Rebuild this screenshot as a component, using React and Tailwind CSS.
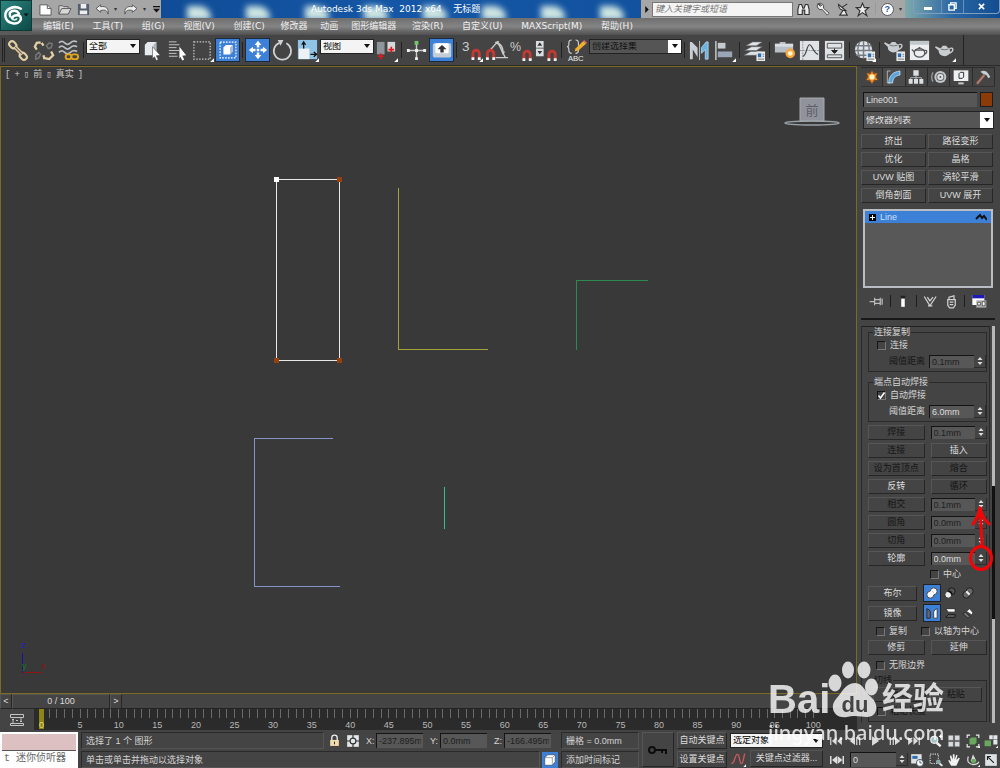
import React from 'react'
import clsx from 'clsx'

const Icon = ({ size = 'size-6', children }) => (
  <svg viewBox="0 0 24 24" className={clsx('shrink-0', size)} fill="none" aria-hidden="true">
    {children}
  </svg>
)

const Corner = () => <path d="M24 20v4h-4z" fill="#fff" />

const Magnet = ({ x = 13, y = 11 }) => (
  <g transform={`translate(${x} ${y})`}>
    <path d="M1.500 10V5a3.300 3.300 0 0 1 6.600 0v5" stroke="#c23a32" strokeWidth="3" />
    <path d="M0 10.500h3M6.600 10.500h3" stroke="#f0f0f0" strokeWidth="3" />
  </g>
)

const Teapot = () => (
  <g fill="#c9cdd0">
    <ellipse cx="12" cy="13" rx="6" ry="5" />
    <path d="M7 13 2 8.500l1-1L8 10zM10 7h4l1 2H9z" />
    <path d="M17 10c5-2 5 3 0 5" stroke="#c9cdd0" strokeWidth="1.400" fill="none" />
    <path d="M8 10.500q4 1.600 8 0" stroke="#6c7378" fill="none" />
  </g>
)

const Sheet = () => (
  <g>
    <path d="M14 13h9v10h-9z" fill="#e8eaec" />
    <path d="M15.500 15h3.500v4h-3.500z" fill="#2c6fb0" />
    <path d="M20.500 16h1.500M20.500 18h1.500M15.500 21H22" stroke="#777" />
  </g>
)

const icons = {
  link: (
    <g stroke="#e3cfa5" strokeWidth="2.200">
      <rect x="2" y="3" width="8" height="6" rx="3" transform="rotate(45 6 6)" />
      <rect x="13" y="15" width="8" height="6" rx="3" transform="rotate(45 17 18)" />
      <path d="m8 8 8 8" strokeWidth="4" />
      <path d="m8.500 8.500 7 7" stroke="#6d6250" strokeWidth="1.200" />
    </g>
  ),
  unlink: (
    <g strokeWidth="2.400">
      <path d="M9 3.500 5 4 3 8l2 3M10 4l2 3M13 20l5 1 4-4-2-4M12 17l1 4" stroke="#e3cfa5" />
      <path d="m15 7 3-3 3 1-1 4-3 1zM4 17l3-3 2 2-2 4-3 1z" stroke="#777" strokeWidth="1.600" />
    </g>
  ),
  bind: (
    <g>
      <path d="M2 4q3-3 6 0t6 0 7-1M2 9q3-3 6 0t6 0 7-1M2 14q3-3 6 0t6 0 7-1" stroke="#b9bcc0" strokeWidth="1.700" />
      <rect x="9" y="16" width="6" height="5" rx="2.500" fill="#444" stroke="#e0a41e" strokeWidth="2" />
      <rect x="15" y="16" width="7" height="5" rx="2.500" fill="#444" stroke="#e0a41e" strokeWidth="2" />
    </g>
  ),
  select: (
    <g>
      <path d="m4 6 3-3h9v11l-3 3H4z" fill="#e8ebed" />
      <path d="M13 6v11l3-3V3z" fill="#aeb5bb" />
      <path d="m12 8 8 9-4 .5 2 4-2 1-2-4-2 2z" fill="#fff" stroke="#444" strokeWidth=".6" />
    </g>
  ),
  selectByName: (
    <g>
      <path d="M3 3h8M3 6h11M3 9h8M3 12h11M3 15h8M3 18h9" stroke="#c5c8ca" />
      <path d="m14 8 7 9-4 .5 2 4-2 1-2-4-1 2z" fill="#fff" />
    </g>
  ),
  region: (
    <g>
      <rect x="3" y="3" width="17" height="18" stroke="#ccc" strokeWidth="1.300" strokeDasharray="1.500 1.500" />
      <Corner />
    </g>
  ),
  crossing: (
    <g>
      <rect x="2.500" y="2.500" width="19" height="19" stroke="#fff" strokeWidth="1.400" strokeDasharray="2 1.500" />
      <path d="m6.500 9 3-3h8v8l-3 3.500h-8z" fill="#fff" />
      <path d="M14.500 9v8.500l3-3.500V6z" fill="#a9bad0" />
    </g>
  ),
  move: (
    <path
      d="m12 1 4 5h-2.500v3h-3V6H8zM12 23l-4-5h2.500v-3h3v3H16zM1 12l5-4v2.500h3v3H6V16zM23 12l-5 4v-2.500h-3v-3h3V8zM10.500 10.500h3v3h-3z"
      fill="#fff"
    />
  ),
  rotate: (
    <g>
      <path d="M16 4.500a9 9 0 1 1-7-.5" stroke="#cfd2d4" strokeWidth="1.800" />
      <path d="M7 1h6l-3 6z" fill="#cfd2d4" />
    </g>
  ),
  scale: (
    <g>
      <path d="M2 1h20v20H2z" fill="#8fc4e6" />
      <path d="M3 10h11v11H3z" fill="#eef1f3" />
      <path d="M8 10V4M6 6l2-3 2 3M15 16h6M18.500 13.500l3 2.500-3 2.500" stroke="#111" strokeWidth="1.400" />
      <Corner />
    </g>
  ),
  pivot: (
    <g>
      <path d="M2 3h8v13H2z" fill="#8e959b" />
      <path d="M13 3h8v10h-8z" fill="#d5d9dc" />
      <path d="M6 15v6M3 18h6M17 8v6M14 11h6" stroke="#e01b1b" strokeWidth="1.800" />
      <Corner />
    </g>
  ),
  manipulate: (
    <g>
      <path d="M12 5v16M4 12h16" stroke="#c9c9c9" strokeWidth="1.500" />
      <path d="M10.500 10.500h3v3h-3zM2 10.500h3v3H2zM19 10.500h3v3h-3zM10.500 19h3v3h-3z" fill="#eee" />
      <path d="M10 2h4v4h-4z" fill="#74c46b" />
    </g>
  ),
  keyboard: (
    <g>
      <rect x="1" y="4" width="22" height="17" rx="2" fill="#c4ccd4" />
      <rect x="4" y="4" width="16" height="12" rx="1" fill="#fff" />
      <path d="m12 6 5.500 5H14v4h-4v-4H6.500z" fill="#333" />
    </g>
  ),
  angle: (
    <g>
      <path d="M5 12 13 3l8 16M11 4q8 0 8 12M11 19.500h13" stroke="#ccc" strokeWidth="1.400" />
      <path d="m10 3 5-1-2 4zM17 13h4l-2 4z" fill="#ccc" />
      <Magnet x={1} y={10} />
    </g>
  ),
  spinner: (
    <g>
      <path d="M1 2h8v7H1zM1 10h8v8H1z" fill="#d9dee2" />
      <path d="m5 3.500 2.500 3.500h-5zM5 16l2.500-3.500h-5z" fill="#333" />
      <Magnet x={13} y={11} />
    </g>
  ),
  mirror: (
    <g>
      <path d="M2 3v18h3V11l5 8V9L4 3z" fill="#c9cfd4" />
      <path d="M12 2v20" stroke="#bbb" />
      <path d="M21 3v18h-3V11l-4 4V9l5-6z" fill="#6fb1de" stroke="#bfe0f5" strokeWidth=".8" />
    </g>
  ),
  align: (
    <g>
      <path d="M3 2v20" stroke="#ccc" strokeWidth="1.500" />
      <path d="M5 4h8v6H5z" fill="#c5cacf" />
      <path d="M5 13h15v6H5z" fill="#9aa5b5" />
      <Corner />
    </g>
  ),
  layers: (
    <g>
      <path d="m3 7 7-4h10l-6 4zM2 12l7-4h11l-6 4zM1 17l7-4h11l-6 4z" fill="#dfe3e6" stroke="#666" strokeWidth=".6" />
      <Sheet />
    </g>
  ),
  graphite: (
    <g>
      <path d="M2 5h5V3h6v2h8v9H2z" fill="#b9bfc6" />
      <path d="M2 5h19v3H2z" fill="#d9dde1" />
      <circle cx="18" cy="15" r="5" fill="#f7a53c" />
      <circle cx="18" cy="15" r="2.500" fill="#fff6cf" />
    </g>
  ),
  curve: (
    <g>
      <path d="M2 2h20v20H2z" fill="#dfe3e6" />
      <path d="M5 2v20M2 12h20" stroke="#8b9298" strokeDasharray="2 1" />
      <path d="M5 18c4 0 4-12 7-12s4 9 9 10" stroke="#444" strokeWidth="1.300" />
    </g>
  ),
  schematic: (
    <g>
      <path d="M2 2h20v20H2z" fill="#dfe3e6" />
      <path d="M4.500 4.500h15v5h-15zM4.500 16.500h15v3h-15z" stroke="#555" />
      <path d="M12 10v4M9 12l3 3 3-3z" stroke="#222" fill="#222" />
    </g>
  ),
  material: (
    <g>
      <circle cx="11" cy="11" r="9" fill="#e1e5e8" />
      <path d="M3 7h16M2 12h18M3 17h16M11 2v18M7 3q-4 8 0 16M15 3q4 8 0 16" stroke="#747b82" strokeWidth="1.500" />
      <Sheet />
      <Corner />
    </g>
  ),
  renderSetup: (
    <g>
      <g transform="translate(-1 -4)">
        <Teapot />
      </g>
      <Sheet />
    </g>
  ),
  renderFrame: (
    <g>
      <path d="M2 2h20v20H2z" fill="#eceef0" />
      <path d="M2 2h20v4H2z" fill="#c2c7cb" />
      <ellipse cx="12" cy="14.500" rx="5.500" ry="4.500" stroke="#555" strokeWidth="1.300" />
      <path d="m7 14-3-3M17 12c4-1 3 3 0 4M7 11.500h10M11 9h2" stroke="#555" strokeWidth="1.300" />
    </g>
  ),
  render: (
    <g>
      <Teapot />
      <Corner />
    </g>
  ),
}

const ToolButton = ({ name, active, children }) => (
  <button
    aria-label={name}
    className={clsx(
      'flex h-6 w-[25px] shrink-0 items-center justify-center',
      active && 'border border-[#1c2a3c] bg-[#3d80d8]'
    )}
  >
    <Icon size={active ? 'size-[20px]' : 'size-[23px]'}>{children || icons[name]}</Icon>
  </button>
)

const ToolSep = () => (
  <div className="flex h-4 w-[5px] shrink-0 justify-center">
    <div className="w-px bg-[#222]" />
  </div>
)

const Drop = ({ label, value, className, dark }) => (
  <div
    className={clsx(
      'relative h-[15px] shrink-0 border border-[#222]',
      dark ? 'bg-[#555]' : 'bg-[#f4f4f4] text-black',
      className
    )}
  >
    <select aria-label={label} className="block h-full w-full appearance-none px-0.5 leading-none outline-none">
      <option>{value}</option>
    </select>
    <span
      className={clsx(
        'pointer-events-none absolute inset-y-0 right-0 flex w-[13px] items-center justify-center',
        dark && 'bg-white'
      )}
    >
      <svg viewBox="0 0 6 4" className="h-1 w-1.5">
        <path d="M0 0h6L3 4z" fill="#111" />
      </svg>
    </span>
  </div>
)

const Btn = ({ off, className, children }) => (
  <button
    disabled={off}
    className={clsx(
      'h-[15px] truncate border border-t-[#565656] border-r-[#262626] border-b-[#262626] border-l-[#565656] bg-[#444] text-center leading-[13px]',
      off ? 'text-[#161616]' : 'text-[#dcdcdc]',
      className
    )}
  >
    {children}
  </button>
)

const Field = ({ label, value, off, className }) => (
  <input
    aria-label={label}
    defaultValue={value}
    className={clsx(
      'h-[13px] min-w-0 border-t border-l border-[#141414] bg-[#575757] px-0.5 leading-none outline-none',
      off ? 'text-[#1e1e1e]' : 'text-[#dedede]',
      className
    )}
  />
)

const Spin = () => (
  <button aria-label="spinner" className="flex h-[13px] w-3 shrink-0 items-center justify-center border-r border-b border-[#2c2c2c]">
    <svg viewBox="0 0 6 10" className="h-[10px] w-1.5" fill="#ddd">
      <path d="M3 1 5.500 4h-5zM3 9 .5 6h5z" />
    </svg>
  </button>
)

const Check = ({ label, checked, className }) => (
  <label className={clsx('flex items-center gap-1', className)}>
    <span className="relative size-[9px] shrink-0">
      <input
        type="checkbox"
        defaultChecked={checked}
        className="peer block size-[9px] appearance-none border border-t-[#161616] border-r-[#777] border-b-[#777] border-l-[#161616] bg-[#444]"
      />
      <svg viewBox="0 0 9 9" className="pointer-events-none absolute inset-0 hidden peer-checked:block" fill="none">
        <path d="M1.500 4.500 3.500 7 7.500 1.500" stroke="#fff" strokeWidth="1.600" />
      </svg>
    </span>
    {label}
  </label>
)

const TitleBar = () => (
  <div className="flex h-[18px] bg-[#a6a6a6]">
    <div className="flex w-[129px] shrink-0 items-center pl-1 text-[#333]">
      <button aria-label="New" className="w-[19px] px-0.5">
        <svg viewBox="0 0 16 14" className="h-[13px] w-[15px]"><path d="M2 2h8l4 4v7H2z" fill="#fff" stroke="#555" /><path d="M10 2v4h4" fill="none" stroke="#555" /></svg>
      </button>
      <button aria-label="Open" className="w-[19px] px-0.5">
        <svg viewBox="0 0 16 14" className="h-[13px] w-[15px]"><path d="M2 12V3h4l1 1h5v2h3l-3 6z" fill="#d8d8d8" stroke="#555" /><path d="m2 12 3-6h7" fill="none" stroke="#555" /></svg>
      </button>
      <button aria-label="Save" className="w-[19px] px-0.5">
        <svg viewBox="0 0 16 14" className="h-[13px] w-[15px]"><path d="M2 1h12v12H2z" fill="#555e6e" /><path d="M5 1h6v5H5zM4 8h8v4H4z" fill="#eee" /></svg>
      </button>
      <button aria-label="Undo" className="w-[19px] px-0.5">
        <svg viewBox="0 0 16 14" className="h-[13px] w-[15px]"><path d="m1 6 5-4v2c6-1 9 2 8 8-1-4-3-5-8-4v2z" fill="#eee" stroke="#555" /></svg>
      </button>
      <span className="w-[7px] text-center text-[6px]">▾</span>
      <button aria-label="Redo" className="w-[21px] pl-1">
        <svg viewBox="0 0 16 14" className="h-[13px] w-[15px]"><path d="m15 6-5-4v2C4 3 1 6 2 12c1-4 3-5 8-4v2z" fill="#eee" stroke="#555" /></svg>
      </button>
      <span className="w-[9px] text-center text-[6px]">▾</span>
      <button aria-label="Customize" className="pl-1">
        <svg viewBox="0 0 8 8" className="size-[7px]"><path d="M0 0h8v1.500H0zM0 3h8L4 7.500z" fill="#111" /></svg>
      </button>
    </div>
    <div className="relative flex-1 overflow-hidden bg-gradient-to-r from-[#0f4c97] via-[#1557a6] to-[#12529f]">
      <div className="flex h-full items-end justify-around pl-2">
        {['a', 'b', 'c', 'd', 'e', 'f', 'g', 'h'].map((k) => (
          <span key={k} className="h-3.5 w-6 translate-y-0.5 rounded-tr-xl bg-[#cfe6e2] blur-[3px]" />
        ))}
      </div>
      <div className="absolute inset-0 pl-[150px] font-['DejaVu_Sans','Noto_Sans_CJK_SC',sans-serif] leading-[18px] whitespace-pre text-white">
        {'Autodesk 3ds Max  2012 x64    无标题'}
      </div>
    </div>
    <div className="flex w-[264px] shrink-0 items-center">
      <span className="flex w-[11px] justify-center">
        <svg viewBox="0 0 4 8" className="h-[7px] w-1"><path d="M0 0v8l4-4z" fill="#111" /></svg>
      </span>
      <input
        aria-label="Search"
        placeholder="键入关键字或短语"
        className="h-[15px] w-[141px] border border-[#777] bg-[#f4f4f4] px-0.5 italic outline-none placeholder:text-[#777]"
      />
      <div className="flex flex-1 items-center justify-around px-px">
        <Icon size="size-[15px]"><path d="M3 20v-8l2-8h4l2 6h2l2-6h4l2 8v8h-7v-7h-4v7z" fill="#eee" stroke="#333" strokeWidth="1.800" /></Icon>
        <Icon size="size-[15px]"><path d="M3 3a6 6 0 0 1 9 7l9 8-3 3-8-9a6 6 0 0 1-7-9l4 4 2-2z" fill="#eee" stroke="#444" strokeWidth="1.500" /></Icon>
        <Icon size="size-[15px]"><path d="M4 4q0 10 12 10zM9 9l9-6M11 14l-5 7h12l-4-7" fill="#eee" stroke="#333" strokeWidth="1.800" /></Icon>
        <Icon size="size-[15px]"><path d="m12 2 3 7h7l-6 5 3 8-7-5-7 5 3-8-6-5h7z" fill="#eee" stroke="#333" strokeWidth="1.800" /></Icon>
        <span className="h-3 w-px bg-[#999]" />
        <button aria-label="Help" className="flex size-[13px] items-center justify-center rounded-full border border-[#556] bg-white font-bold text-[#2256b4]">?</button>
        <span className="text-[6px] text-[#333]">▾</span>
      </div>
    </div>
    <div className="flex w-[95px] shrink-0 bg-gradient-to-r from-[#7fa9ab] via-[#2a67a4] to-[#114c90] pl-2">
      <div className="flex h-[14px] flex-1 rounded-b border border-t-0 border-[#7f9fc0]">
        <button aria-label="Minimize" className="flex w-7 items-center justify-center border-r border-[#6d90b4]">
          <span className="mt-1 h-[3px] w-2 bg-white" />
        </button>
        <button aria-label="Restore" className="flex w-[22px] items-center justify-center border-r border-[#6d90b4]">
          <svg viewBox="0 0 10 10" className="size-[9px]" fill="none" stroke="#fff" strokeWidth="1.500"><path d="M1 3h6v6H1zM3 3V1h6v6H7" /></svg>
        </button>
        <button aria-label="Close" className="flex flex-1 items-center justify-center">
          <svg viewBox="0 0 8 8" className="size-[7px]" stroke="#fff" strokeWidth="1.800"><path d="m1 1 6 6M7 1 1 7" /></svg>
        </button>
      </div>
    </div>
  </div>
)

const menus = ['编辑(E)', '工具(T)', '组(G)', '视图(V)', '创建(C)', '修改器', '动画', '图形编辑器', '渲染(R)', '自定义(U)', 'MAXScript(M)', '帮助(H)']

const Header = () => (
  <header className="flex bg-[#5a5a5a]">
    <button aria-label="Application menu" className="h-[31px] w-[32px] shrink-0 border border-[#0b3a38] bg-gradient-to-br from-[#2d8680] to-[#0b4a47]">
      <svg viewBox="0 0 30 30" className="size-full" fill="none">
        <path d="M20 8C13 4 3 8 4 16s14 10 16 3c1-6-8-5-9-1M9 16c-3-6 6-8 9-3" stroke="#fff" strokeWidth="2.600" strokeLinecap="round" />
        <path d="M11 18c1 2 4 2 5 0" stroke="#d7eceb" strokeWidth="2" />
        <path d="M23 13h5l-2.500 3z" fill="#111" />
      </svg>
    </button>
    <div className="min-w-0 flex-1">
      <TitleBar />
      <nav className="flex h-[17px] items-center bg-gradient-to-b from-[#6f6f6f] via-[#848484] to-[#505050] pl-0.5 font-['DejaVu_Sans','Noto_Sans_CJK_SC',sans-serif] text-[#f0f0f0]">
        <div className="flex w-[608px] justify-between">
          {menus.map((m) => (
            <button key={m} className={clsx('leading-none whitespace-nowrap', m.includes('(') ? 'px-[9px]' : 'px-1.5')}>
              {m}
            </button>
          ))}
        </div>
      </nav>
    </div>
  </header>
)

const Toolbar = () => (
  <div className="h-[31px] border-b border-[#2a2a2a]">
    <div className="flex h-[30px] w-max items-center border-r border-[#222] pr-1.5">
      <div className="flex w-1.5 justify-center gap-px">
        <span className="h-6 w-px bg-[#222]" />
        <span className="h-6 w-px bg-[#222]" />
      </div>
      <ToolButton name="link" />
      <ToolButton name="unlink" />
      <ToolButton name="bind" />
      <ToolSep />
      <Drop label="Selection filter" value="全部" className="mb-2 w-[54px]" />
      <ToolButton name="select" />
      <ToolButton name="selectByName" />
      <ToolButton name="region" />
      <ToolButton name="crossing" active />
      <ToolSep />
      <ToolButton name="move" active />
      <ToolButton name="rotate" />
      <ToolButton name="scale" />
      <Drop label="Coordinate system" value="视图" className="mb-2 w-[54px]" />
      <ToolButton name="pivot" />
      <ToolSep />
      <ToolButton name="manipulate" />
      <ToolButton name="keyboard" active />
      <ToolSep />
      <ToolButton name="Snap">
        <text x="2" y="12" fontSize="14" fill="#ccc">3</text>
        <Magnet x={12} y={10} />
        <Corner />
      </ToolButton>
      <ToolButton name="angle" />
      <ToolButton name="Percent snap">
        <text x="0" y="12" fontSize="13" fill="#ccc">%</text>
        <Magnet />
      </ToolButton>
      <ToolButton name="spinner" />
      <ToolSep />
      <ToolButton name="Named sets">
        <path d="M7 1Q4 1 4 4v2q0 2-2 2 2 0 2 3v1q0 3 3 3M11 1q3 0 3 3v2q0 2 2 2-2 0-2 3v1q0 3-3 3" stroke="#ccc" strokeWidth="1.200" />
        <path d="m10 13 1-3 8-8 3 3-8 7z" fill="#f0b02e" />
        <path d="m19 2 1-1 3 3-1 1z" fill="#e66" />
        <text x="3" y="23" fontSize="8" fill="#eee">ABC</text>
      </ToolButton>
      <Drop label="Named selection set" value="创建选择集" dark className="mb-2 w-[93px] text-[#111]" />
      <ToolSep />
      <ToolButton name="mirror" />
      <ToolButton name="align" />
      <ToolSep />
      <ToolButton name="layers" />
      <ToolSep />
      <ToolButton name="graphite" />
      <ToolButton name="curve" />
      <ToolButton name="schematic" />
      <ToolSep />
      <ToolButton name="material" />
      <ToolSep />
      <ToolButton name="renderSetup" />
      <ToolButton name="renderFrame" />
      <ToolButton name="render" />
    </div>
  </div>
)

const Viewport = () => (
  <div className="relative flex-1 overflow-hidden border border-[#7f6822] bg-[#393939]">
    <div className="flex gap-1 px-1 pt-0.5 font-['Liberation_Mono','Noto_Sans_CJK_SC',monospace] leading-[12px] text-[#c8c8c8]">
      <span>[</span><span>+</span><span>▯</span><span>前</span><span>▯</span><span>真实</span><span>]</span>
    </div>
    {/* splines */}
    <svg className="absolute inset-0 size-full" fill="none" shapeRendering="crispEdges">
      <path d="M275.500 112.500h63v181h-63z" stroke="#e8e8e8" />
      <path d="M397.500 120.500v162h89" stroke="#a3a33c" />
      <path d="M575.500 282.500v-69.500h71" stroke="#2c8a50" />
      <path d="M332 371.500h-78.500v148H339" stroke="#8494c6" />
      <path d="M443.500 420v42" stroke="#3fb797" />
      <path d="M273 110h5v5h-5z" fill="#fff" />
      <path d="M336 110h5v5h-5zM336 291h5v5h-5zM273 291h5v5h-5z" fill="#97400f" />
    </svg>
    {/* view cube */}
    <svg className="absolute top-7 right-3.5 h-9 w-[60px]" viewBox="0 0 60 36" fill="none">
      <ellipse cx="30" cy="28" rx="27" ry="2" stroke="#98a0a4" strokeWidth="1.500" />
      <path d="M18 3h24v23H18z" fill="#90939b" stroke="#a7aab2" />
      <text x="30" y="20" fontSize="13" textAnchor="middle" fill="#5c5f66">前</text>
    </svg>
    {/* axis tripod */}
    <svg className="absolute bottom-3.5 left-4 h-10 w-8" viewBox="0 0 32 40" fill="none">
      <path d="M5.500 14v20" stroke="#1414a0" />
      <path d="M6 33.500h19" stroke="#8c1414" />
      <text x="4" y="9" fontSize="9" fill="#2020d0">z</text>
      <text x="5" y="30" fontSize="9" fill="#148014">y</text>
      <text x="24" y="30" fontSize="9" fill="#8c1414">x</text>
    </svg>
  </div>
)

const TimeLine = () => (
  <>
    <div className="flex h-[15px] items-center border-b border-[#222] text-[#d0d0d0]">
      <Btn className="h-[13px] w-3">&lt;</Btn>
      <Btn className="h-[13px] w-[98px]">0 / 100</Btn>
      <Btn className="h-[13px] w-3">&gt;</Btn>
    </div>
    <div className="flex h-[21px] bg-[#2b2b2b]">
      <button aria-label="Mini curve editor" className="flex w-[34px] items-center justify-center bg-[#444]">
        <svg viewBox="0 0 16 14" className="h-[14px] w-4" fill="none" stroke="#c4c4c4">
          <path d="M1.500 1.500h13v3h-13zM1.500 10.500h13v2h-13zM4 6v4M12 5v4M3 7l1-1 1 1M11 8l1 1 1-1M7 7.500h2" />
        </svg>
      </button>
      <div className="mr-[43px] ml-[7px] flex flex-1 justify-between">
        {Array.from({ length: 101 }, (_, i) => (
          <div key={i} className="relative flex w-px flex-col">
            {i === 0 && <span className="absolute top-0 -left-0.5 h-5 w-[5px] bg-[#8f8418]" />}
            <div className="h-[9px] shrink-0 bg-[#6a6a6a]" />
            {i % 5 === 0 && (
              <span className={clsx('relative flex w-px justify-center pt-0.5 leading-[10px]', i ? 'text-[#b8b8b8]' : 'text-[#e4dc70]')}>{i}</span>
            )}
          </div>
        ))}
      </div>
    </div>
  </>
)

const Group = ({ title, className, children }) => (
  <fieldset className={clsx('border border-[#2a2a2a] pb-0.5', className)}>
    <legend className="ml-1 h-[10px] px-px leading-[10px]">{title}</legend>
    {children}
  </fieldset>
)

const Threshold = ({ value, off }) => (
  <div className="flex h-4 items-center">
    <span className={clsx('mr-1 flex-1 text-right', off && 'text-[#161616]')}>阈值距离</span>
    <Field label="阈值距离" value={value} off={off} className="w-[45px]" />
    <Spin />
  </div>
)

const rows = [
  { name: '焊接', off: true, value: '0.1mm' },
  { name: '连接', off: true, right: '插入' },
  { name: '设为首顶点', off: true, right: '熔合', rightOff: true },
  { name: '反转', right: '循环', rightOff: true },
  { name: '相交', off: true, value: '0.1mm' },
  { name: '圆角', off: true, value: '0.0mm' },
  { name: '切角', off: true, value: '0.0mm' },
  { name: '轮廓', value: '0.0mm' },
]

const IconToggle = ({ label, active, children }) => (
  <button
    aria-label={label}
    className={clsx('flex h-[18px] w-[18px] items-center justify-center', active && 'border border-[#222] bg-[#3d80d8]')}
  >
    <svg viewBox="0 0 14 14" className="size-3 shrink-0" fill="none">{children}</svg>
  </button>
)

const Geometry = () => (
  <div className="min-w-0 flex-1 border border-t-[#222] border-r-[#2a2a2a] border-b-transparent border-l-[#2a2a2a] pr-0.5 pl-1.5">
    <Group title="连接复制">
      <Check label="连接" className="h-4 pl-2" />
      <Threshold value="0.1mm" off />
    </Group>
    <Group title="端点自动焊接" className="mt-[5px]">
      <Check label="自动焊接" checked className="h-4 pl-2" />
      <Threshold value="6.0mm" />
    </Group>
    <div className="mt-[3px] grid grid-cols-2 gap-x-1.5 gap-y-[3px]">
      {rows.map((r) => (
        <React.Fragment key={r.name}>
          <Btn off={r.off}>{r.name}</Btn>
          {r.right ? (
            <Btn off={r.rightOff}>{r.right}</Btn>
          ) : (
            <div className="flex items-center">
              <Field label={r.name} value={r.value} off={r.off} className="flex-1" />
              <Spin />
            </div>
          )}
        </React.Fragment>
      ))}
    </div>
    <Check label="中心" className="mt-0.5 h-3 pl-[62px]" />
    <div className="mt-1 flex items-center">
      <Btn className="mr-1.5 w-[49px]">布尔</Btn>
      <IconToggle label="Union" active>
        <circle cx="9" cy="5" r="4" fill="#fff" stroke="#333" /><circle cx="5" cy="9" r="4" fill="#fff" stroke="#333" /><path d="m5 5 4 4" stroke="#fff" strokeWidth="3" />
      </IconToggle>
      <IconToggle label="Subtraction">
        <circle cx="9" cy="5" r="4" fill="#555" stroke="#111" /><circle cx="5" cy="9" r="4" fill="#eee" stroke="#222" /><path d="M5 5q4 0 4 4" stroke="#111" strokeWidth="2" />
      </IconToggle>
      <IconToggle label="Intersection">
        <circle cx="9" cy="5" r="4" fill="#666" stroke="#181818" /><circle cx="5" cy="9" r="4" fill="#666" stroke="#181818" /><path d="m5 5 4 4" stroke="#eee" strokeWidth="2.500" />
      </IconToggle>
    </div>
    <div className="mt-0.5 flex items-center">
      <Btn className="mr-1.5 w-[49px]">镜像</Btn>
      <IconToggle label="Mirror horizontally" active>
        <path d="M1 2q4 1 4 4v7H1z" fill="#667" stroke="#222" /><path d="M13 2Q9 3 9 6v7h4z" fill="#fff" stroke="#333" />
      </IconToggle>
      <IconToggle label="Mirror vertically">
        <path d="M2 2h11v4H5z" fill="#fff" stroke="#222" /><path d="M5 9h8v3H2z" fill="#666" stroke="#111" />
      </IconToggle>
      <IconToggle label="Mirror both">
        <path d="m5 5 4-3 4 5-2 2z" fill="#fff" stroke="#333" /><path d="m1 8 3-2 5 5-2 2z" fill="#777" stroke="#222" />
      </IconToggle>
    </div>
    <div className="mt-[3px] flex h-3 pl-2">
      <Check label="复制" className="w-[45px] whitespace-nowrap" />
      <Check label="以轴为中心" className="whitespace-nowrap" />
    </div>
    <div className="mt-[3px] grid grid-cols-2 gap-x-1.5">
      <Btn>修剪</Btn>
      <Btn>延伸</Btn>
    </div>
    <Check label="无限边界" className="mt-1 h-3 pl-2" />
    <fieldset className="mt-1 border border-[#2a2a2a] pb-0.5">
      <legend className="ml-1 h-[10px] px-px leading-[10px] text-[#161616]">切线</legend>
      <div className="grid h-[18px] grid-cols-2 items-center gap-x-1 px-1">
        <Btn off>复制</Btn>
        <Btn off>粘贴</Btn>
      </div>
      <Check label="粘贴长度" className="h-4 pl-2 text-[#161616]" />
    </fieldset>
  </div>
)

const tabs = [
  ['Create', <g key="i"><circle cx="12" cy="12" r="8" fill="#8a4a1c" /><path d="m12 2 2 6 6-2-3 6 4 5-6-1-3 6-3-6-6 1 4-5-3-6 6 2z" fill="#f08a24" /><circle cx="12" cy="12" r="4" fill="#fff3c0" /></g>],
  ['Modify', <g key="i"><path d="M4 21C4 11 10 4 21 3v6C14 10 10 14 10 21z" fill="#5aa5dd" stroke="#e8f2fa" /><path d="M2 3h5M2 3v18M2 21h4" stroke="#ddd" /></g>],
  ['Hierarchy', <g key="i" fill="#dcdfe2"><path d="M8 2h8v8H8zM1 15h6v7H1zM9 15h6v7H9zM17 15h6v7h-6z" /><path d="M12 10v5M4 15v-2h16v2" stroke="#dcdfe2" fill="none" /></g>],
  ['Motion', <g key="i"><circle cx="14" cy="12" r="9" fill="#c3c8cc" /><circle cx="14" cy="12" r="6" fill="#666" /><circle cx="14" cy="12" r="4.500" fill="#dfe2e5" /><circle cx="14" cy="12" r="1.500" fill="#555" /><path d="M3 5q-4 7 0 14" stroke="#999" strokeWidth="2" /></g>],
  ['Display', <g key="i"><path d="M1 2h22v16H1z" fill="#eef0f2" /><path d="M8 20h8v3H8z" fill="#c5c9cc" /><path d="m9 7 2-2h5v7l-2 2H9z" stroke="#333" strokeWidth="1.500" /></g>],
  ['Utilities', <g key="i"><path d="M3 22 14 9" stroke="#b4786c" strokeWidth="3.500" /><path d="M8 4q8-4 12 3l3 5-3 2-3-5-4-1z" fill="#c9ced2" /></g>],
]

const modifierButtons = ['挤出', '路径变形', '优化', '晶格', 'UVW 贴图', '涡轮平滑', '倒角剖面', 'UVW 展开']

const CommandPanel = () => (
  <aside className="relative w-[143px] shrink-0 pr-[5px] pl-1">
    <div className="mt-px flex h-5 items-end border-b border-[#333]">
      {tabs.map(([name, art], i) => (
        <button
          key={name}
          aria-label={name}
          className={clsx('flex h-[19px] flex-1 items-center justify-center border-t border-r border-[#2b2b2b]', i === 1 && 'bg-[#4c4c4c]')}
        >
          <Icon size="size-4">{art}</Icon>
        </button>
      ))}
    </div>
    <div className="mt-[5px] flex items-center gap-[3px] pr-0.5 pl-0.5">
      <Field label="Object name" value="Line001" className="h-[15px] flex-1" />
      <button aria-label="Object color" className="h-[15px] w-[13px] border border-[#1e1e1e] bg-[#8b3a08]" />
    </div>
    <Drop label="Modifier list" value="修改器列表" dark className="mt-1 ml-0.5 h-[18px] w-[131px] text-[#e0e0e0]" />
    <div className="mt-[5px] grid grid-cols-2 gap-x-0.5 gap-y-[3px] pr-0.5">
      {modifierButtons.map((m) => (
        <Btn key={m}>{m}</Btn>
      ))}
    </div>
    <div className="mt-1.5 mr-0.5 ml-0.5 h-[79px] border-2 border-[#b9bcc2] bg-[#585858]">
      <div className="flex h-3 items-center bg-[#3d80d8] pl-1 text-[#cfe0f6]">
        <span className="flex size-[7px] items-center justify-center bg-black">
          <svg viewBox="0 0 5 5" className="size-[5px]" stroke="#fff"><path d="M0 2.500h5M2.500 0v5" /></svg>
        </span>
        <span className="ml-1 flex-1">Line</span>
        <svg viewBox="0 0 12 8" className="mr-1 h-2 w-3" fill="none" stroke="#111" strokeWidth="2"><path d="m1 6 4-4 2 3 2-2 3 4" /></svg>
      </div>
    </div>
    <div className="mt-[5px] flex h-4 items-center justify-between pr-2 pl-2">
      <Icon size="size-[15px]"><path d="M1 12h7M9 6v12M9 9h9M9 15h9M18 6v12M21 7v10" stroke="#bbb" strokeWidth="2" /></Icon>
      <span className="h-3 w-px bg-[#1c1c1c]" />
      <Icon size="size-[14px]"><path d="M8 3h8v4H8z" fill="#222" /><path d="M9 8h6v14H9z" fill="#fff" /></Icon>
      <span className="h-3 w-px bg-[#1c1c1c]" />
      <Icon size="size-[15px]"><path d="m2 4 9 15 10-15M7 5l4 6 5-6M8 19h7" stroke="#d0d0d0" strokeWidth="2" /></Icon>
      <Icon size="size-[15px]"><path d="M6 9h12v9l-3 4H9l-3-4zM8 9V5l8-2v6M9 13h6M9 17h6" stroke="#d0d0d0" strokeWidth="2" /></Icon>
      <span className="h-3 w-px bg-[#1c1c1c]" />
      <Icon size="size-[16px]"><path d="M2 3h18v15H2z" fill="#fff" /><path d="M2 3h18v5H2z" fill="#1c1cb4" /><path d="M8 11h15v11H8z" fill="#aaa" /><path d="M10 14h4v4h-4zM17 13h4v6h-4z" fill="#fff" stroke="#333" /></Icon>
    </div>
    <div className="mt-[9px] h-0.5 bg-[#191919]" />
    <div className="mt-1.5 flex gap-0.5">
      <Geometry />
      <div className="flex w-[3px] flex-col bg-[#111]">
        <span className="h-40 bg-[#b8b8b8]" />
        <span className="mt-[133px] flex-1 bg-[#b8b8b8]" />
      </div>
    </div>
    {/* hand drawn mark over the outline spinner */}
    <svg className="pointer-events-none absolute top-[436px] right-1 h-[72px] w-8" viewBox="0 0 32 72" fill="none" stroke="#f20505" strokeWidth="3" strokeLinecap="round">
      <ellipse cx="17" cy="56" rx="10.500" ry="11.500" />
      <path d="M18 44 16 6M9 22q5-6 7-17 2 11 9 17" />
    </svg>
  </aside>
)

const Box = ({ className, children }) => (
  <div className={clsx('h-[17px] truncate border border-t-[#2a2a2a] border-r-[#555] border-b-[#555] border-l-[#2a2a2a] px-1 leading-[16px]', className)}>
    {children}
  </div>
)

const Coord = ({ axis, value }) => (
  <label className="mr-[7px] flex items-center">
    <span className="w-[10px]">{axis}:</span>
    <Field label={axis} value={value} off className="h-[15px] w-[47px]" />
  </label>
)

const playIcons = {
  start: <path d="M2 5h2v14H2zM13 5v14l-8-7zM22 5v14l-8-7z" />,
  prev: <path d="M12 5v14l-9-7zM14 5h2v14h-2zM19 5h2v14h-2z" />,
  play: <path d="M7 4v16l12-8z" />,
  next: <path d="M3 5h2v14H3zM8 5h2v14H8zM12 5v14l9-7z" />,
  end: <path d="M2 5v14l8-7zM11 5v14l8-7zM20 5h2v14h-2z" />,
}

const navIcons = [
  <g key="zoom"><circle cx="9" cy="10" r="6" fill="#9fc3c8" stroke="#eee" strokeWidth="2" /><path d="m13 15 7 6" stroke="#eee" strokeWidth="4" /><path d="M17 4h6M20 1v6" stroke="#fff" strokeWidth="2" /></g>,
  <path key="zoomall" d="M2 2h9v9H2zM13 2h9v9h-9zM2 13h9v9H2zM13 13h9v9h-9z" fill="#d8dcdf" stroke="#555" />,
  <g key="extents"><path d="M2 7V2h5M17 2h5v5M22 17v5h-5M7 22H2v-5" stroke="#eee" strokeWidth="2" /><path d="m6 9 3-3h9v9l-3 3H6z" fill="#6aa860" /><Corner /></g>,
  <g key="extentsall"><path d="M9 2h6v7H9zM16 2h7v7h-7zM16 10h7v8h-7z" fill="#e4e7ea" /><path d="M1 11h11v10H1z" fill="#6aa860" /><Corner /></g>,
  <g key="fov"><path d="M2 2h14v16H2z" stroke="#ddd" strokeWidth="2" strokeDasharray="2 2" /><circle cx="16" cy="15" r="4" fill="#8fa8ac" /><path d="m18 18 5 4" stroke="#eee" strokeWidth="3" /></g>,
  <path key="pan" d="M7 22 2 13l2-1 3 3L5 5l2-1 3 7V2h3v9l3-8 2 1-2 8 4-4 2 1-6 13z" fill="#f2f2f2" />,
  <g key="orbit"><path d="M4 6q-4 12 8 14 8 0 10-5" stroke="#ddd" strokeWidth="2" /><path d="m12 2 6 12H8z" fill="#ddd" /><circle cx="13" cy="14" r="4" fill="#6aa860" /><Corner /></g>,
  <g key="max"><path d="M2 2h20v20H2z" fill="#dfe2e5" /><path d="m7 7 10 10M6 12V6h6" stroke="#222" strokeWidth="2" /></g>,
]

const StatusBar = () => (
  <footer className="flex h-[38px] items-start gap-[3px] pt-0.5 text-[#d4d4d4]">
    <div className="flex w-[78px] shrink-0 flex-col border-2 border-white bg-white">
      <div className="h-4 bg-[#dcc0c2]" />
      <div className="h-4 border-t border-[#555] px-0.5 font-['Liberation_Mono','Noto_Sans_CJK_SC',monospace] text-[10px] leading-4 whitespace-nowrap text-[#666]">t 迷你侦听器</div>
    </div>
    <div className="flex min-w-0 flex-1 flex-col gap-0.5">
      <div className="flex items-center">
        <Box className="flex-1">选择了 1 个 图形</Box>
        <button aria-label="Lock selection" className="w-[18px] pl-1">
          <Icon size="size-[13px]"><path d="M7 11V7a5 5 0 0 1 10 0v4" stroke="#eee" strokeWidth="2.500" /><path d="M4 11h16v11H4z" fill="#f1dcae" /><path d="M12 14v5" stroke="#333" strokeWidth="2" /></Icon>
        </button>
        <button aria-label="Absolute mode" className="w-[24px] pl-1">
          <Icon size="size-[14px]"><path d="M2 2h20v20H2z" fill="#e4e7ea" /><circle cx="12" cy="12" r="5" stroke="#333" strokeWidth="2" /><path d="M12 1v6M12 17v6M1 12h6M17 12h6" stroke="#333" strokeWidth="2" /></Icon>
        </button>
        <Coord axis="X" value="-237.895m" />
        <Coord axis="Y" value="0.0mm" />
        <Coord axis="Z" value="-166.495m" />
      </div>
      <div className="flex items-center gap-0.5">
        <Box className="flex-1">单击或单击并拖动以选择对象</Box>
        <button aria-label="Isolate" className="flex h-4 w-4 items-center justify-center bg-[#3d80d8]">
          <Icon size="size-[14px]"><path d="m3 8 5-5h13v12l-5 6H3z" fill="#fff" stroke="#333" /><path d="M3 8h13v13M16 8l5-5" stroke="#666" /></Icon>
        </button>
      </div>
    </div>
    <div className="flex w-[78px] shrink-0 flex-col gap-0.5">
      <Box>栅格 = 0.0mm</Box>
      <Box>添加时间标记</Box>
    </div>
    <button aria-label="Set key" className="flex h-[35px] w-8 shrink-0 items-center justify-center border border-t-[#565656] border-r-[#262626] border-b-[#262626] border-l-[#565656]">
      <svg viewBox="0 0 20 10" className="h-[10px] w-5" fill="none" stroke="#0c0c0c" strokeWidth="2"><circle cx="4" cy="5" r="3" /><path d="M7 5h12M14 5v3M18 5v4" /></svg>
    </button>
    <div className="flex w-[50px] shrink-0 flex-col gap-0.5">
      <Btn className="h-[17px]">自动关键点</Btn>
      <Btn className="h-[17px]">设置关键点</Btn>
    </div>
    <div className="flex w-[93px] shrink-0 flex-col gap-0.5">
      <Drop label="Key selection" value="选定对象" className="mt-px h-4" />
      <div className="flex items-center">
        <button aria-label="Tangent type" className="w-5">
          <Icon size="size-4"><path d="M2 18c5 3 5-13 9-13s3 14 6 14 3-8 5-15" stroke="#d05a5a" strokeWidth="2" /><Corner /></Icon>
        </button>
        <Btn className="h-[17px] flex-1">关键点过滤器...</Btn>
      </div>
    </div>
    <div className="flex w-[98px] shrink-0 flex-col gap-0.5">
      <div className="flex h-[17px] items-center justify-around">
        {Object.entries(playIcons).map(([name, art]) => (
          <button key={name} aria-label={name}>
            <svg viewBox="0 0 24 24" className="size-[14px]" fill="#ddd">{art}</svg>
          </button>
        ))}
      </div>
      <div className="flex h-[17px] items-center">
        <button aria-label="Key mode" className="w-6 pl-1">
          <svg viewBox="0 0 14 10" className="h-2.5 w-[14px]" fill="#ddd"><path d="M0 1h1.500v8H0zM7 1v8L2 5zM7.500 1v8l5-4zM12.500 1H14v8h-1.500z" /></svg>
        </button>
        <Field label="Current frame" value="0" className="h-[15px] flex-1" />
        <Spin />
        <button aria-label="Time configuration" className="w-4 pl-0.5">
          <Icon size="size-[14px]"><path d="M2 2h18v16H2z" fill="#dfe3e6" /><path d="M4 5h9v5H4z" fill="#2c6fb0" /><circle cx="17" cy="17" r="6" fill="#fff" stroke="#345" strokeWidth="1.500" /><path d="M17 13v4h3" stroke="#345" strokeWidth="1.500" /></Icon>
        </button>
      </div>
    </div>
    <div className="grid w-[73px] shrink-0 grid-cols-4 gap-y-0.5">
      {navIcons.map((art) => (
        <button key={art.key} aria-label={art.key} className="flex h-[17px] items-center justify-center">
          <Icon size="size-[14px]">{art}</Icon>
        </button>
      ))}
    </div>
  </footer>
)

const Watermark = () => (
  <div className="pointer-events-none absolute right-[52px] bottom-[22px] w-[180px] text-white opacity-80">
    <div className="flex h-[60px] items-end font-bold">
      <span className="w-[60px] text-[40px] leading-[42px]">Bai</span>
      <svg viewBox="0 0 50 62" className="h-[62px] w-[50px] shrink-0" fill="#fff">
        <ellipse cx="20" cy="12" rx="6" ry="8.500" />
        <ellipse cx="36" cy="12" rx="6.500" ry="8.500" />
        <ellipse cx="7" cy="25" rx="6.500" ry="8.500" />
        <ellipse cx="43.500" cy="29" rx="6.500" ry="8.500" />
        <path d="M27 25c8 0 10 9 16 14 9 8 6 20-4 20-6 0-12-2-20 0C6 61 1 49 8 41c6-6 9-16 19-16z" />
        <text x="27" y="54" fontSize="22" textAnchor="middle" fill="#454545">du</text>
      </svg>
      <span className="ml-1 text-[31px] leading-[42px]">经验</span>
    </div>
    <div className="font-['Noto_Sans',sans-serif] text-[20px] leading-[26px] font-medium">jingyan.baidu.com</div>
  </div>
)

const App = () => (
  <div className="relative flex min-h-screen w-full flex-col overflow-hidden bg-[#444] font-['Liberation_Sans','Noto_Sans_CJK_SC',sans-serif] text-[9px] leading-[12px] text-[#d4d4d4]">
    <Header />
    <Toolbar />
    <main className="flex flex-1">
      <div className="flex min-w-0 flex-1 flex-col">
        <Viewport />
        <TimeLine />
      </div>
      <CommandPanel />
    </main>
    <StatusBar />
    <Watermark />
  </div>
)

export default App
